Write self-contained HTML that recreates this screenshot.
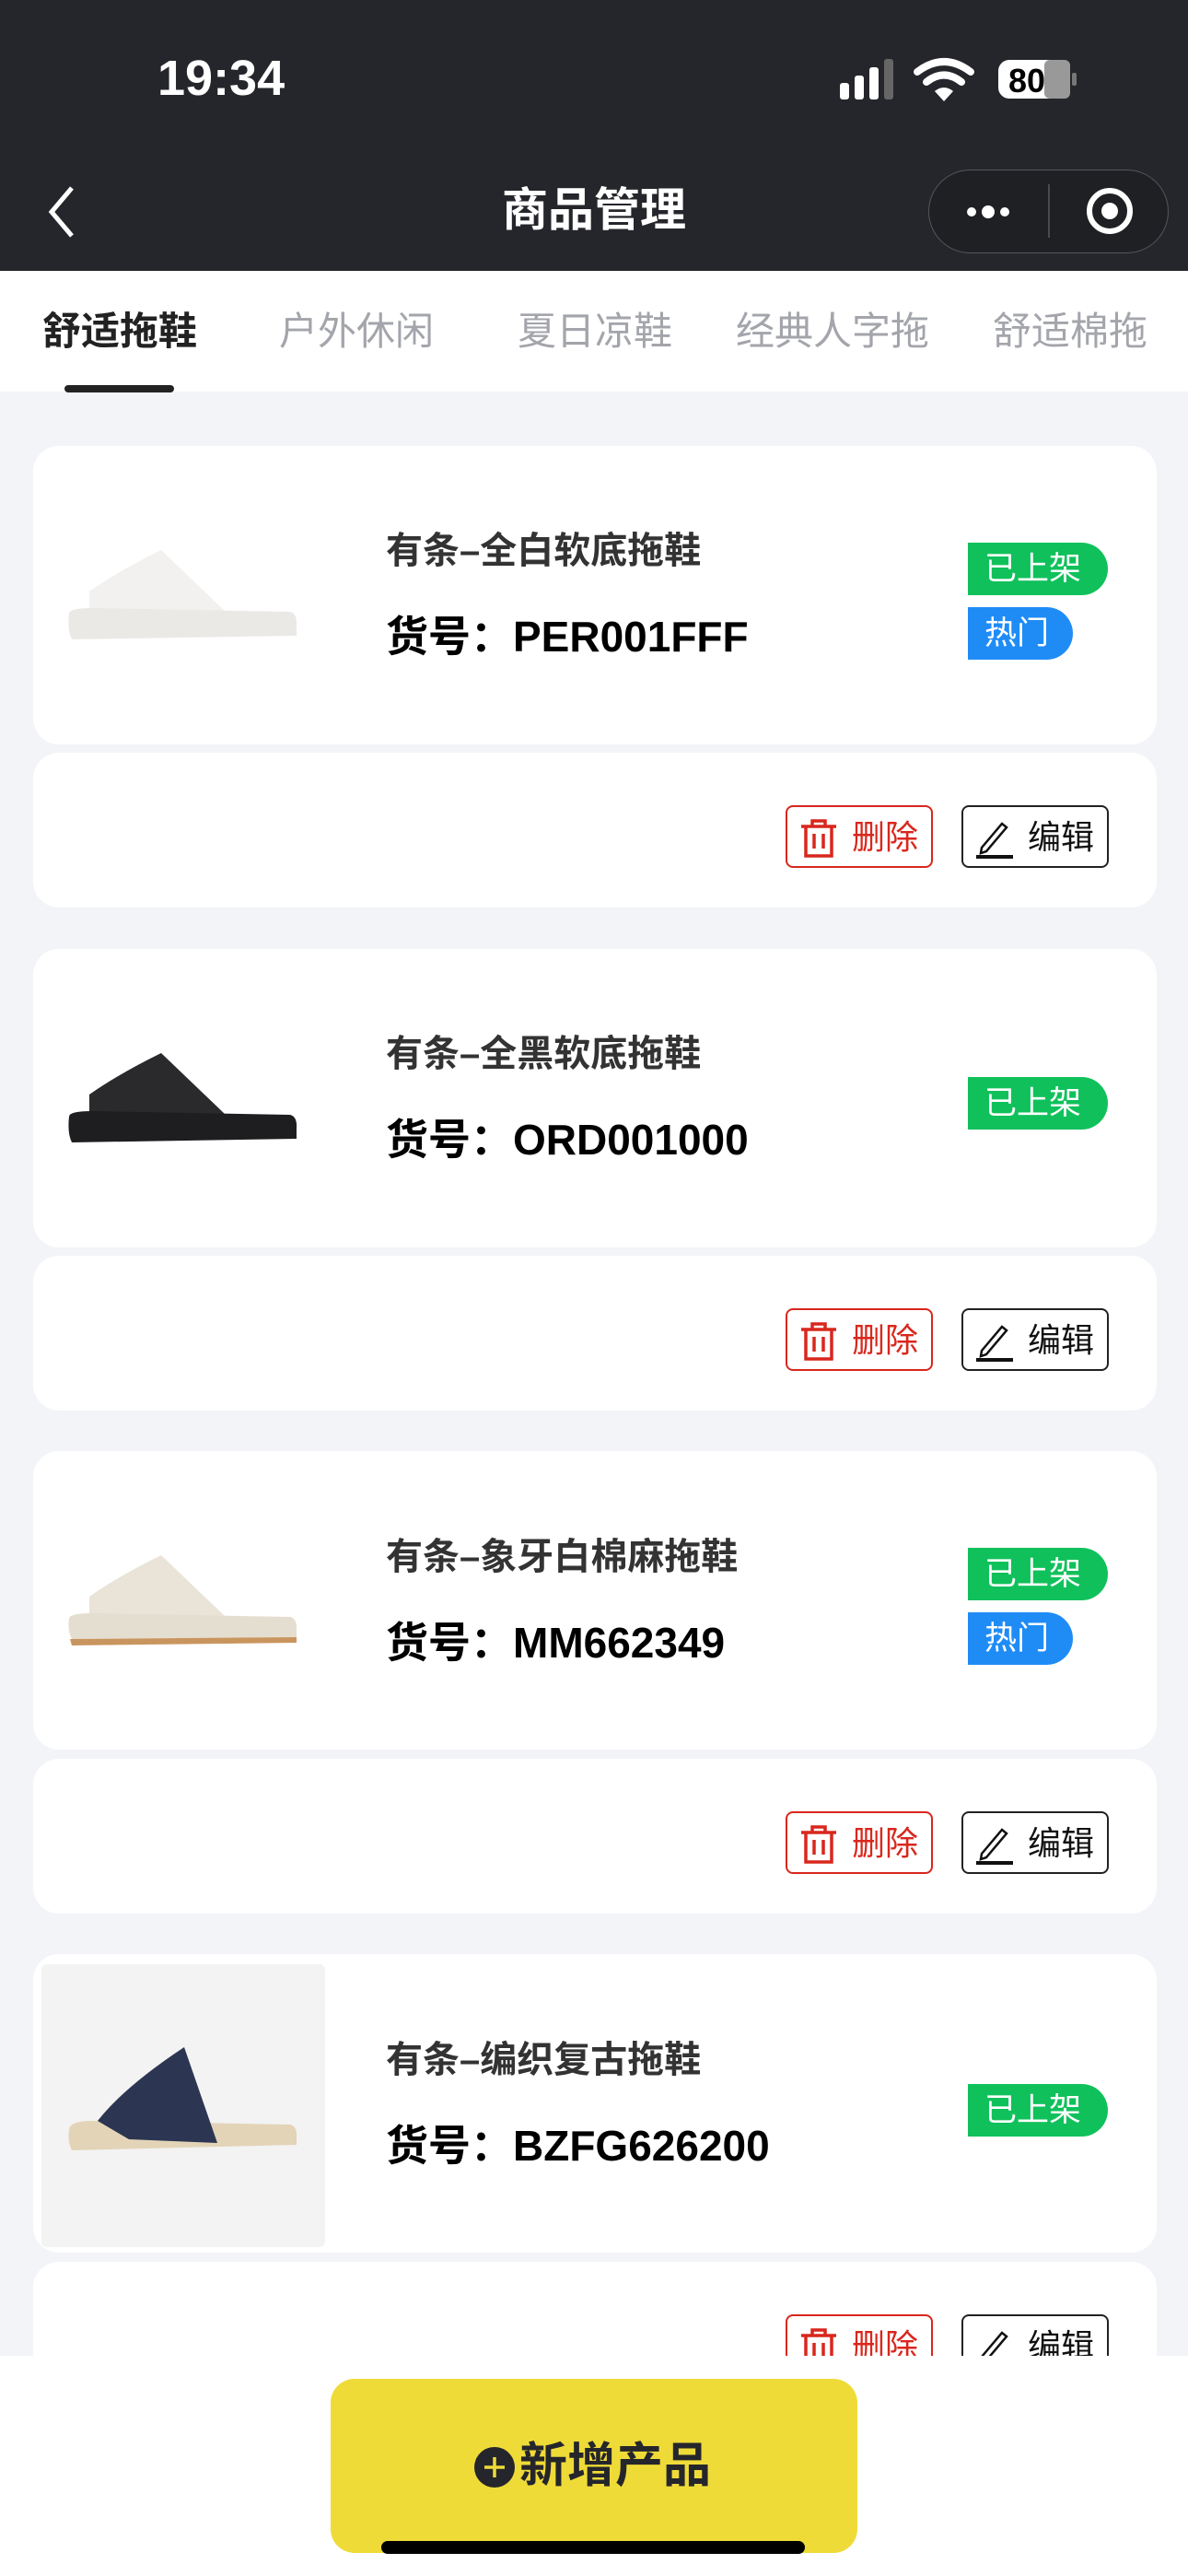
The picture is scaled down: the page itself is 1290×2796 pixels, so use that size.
<!DOCTYPE html>
<html><head><meta charset="utf-8"><style>
*{margin:0;padding:0;box-sizing:border-box}
body{width:1290px;height:2796px;background:#f3f4f8;position:relative;overflow:hidden;font-family:"Liberation Sans","Noto Sans CJK SC",sans-serif}
.abs{position:absolute}
.top{left:0;top:0;width:1290px;height:294px;background:#25262b}
.tabs{left:0;top:294px;width:1290px;height:131px;background:#fff}
.tab{position:absolute;top:331px;font-size:42px;color:#a3a5ab;line-height:58px}
.card{position:absolute;left:36px;width:1220px;background:#fff;border-radius:28px}
.title{position:absolute;left:419px;font-size:40px;color:#333;font-weight:bold;line-height:52px}
.code{position:absolute;left:419px;font-size:46px;color:#000;font-weight:bold;line-height:58px}
.badge{position:absolute;left:1051px;height:57px;border-radius:0 29px 29px 0;color:#fff;font-size:35px;line-height:57px;padding-left:18px}
.g{background:#10c15b;width:152px}
.b{background:#1f8cf6;width:114px}
.btn{position:absolute;width:160px;height:68px;border-radius:8px;font-size:36px;line-height:66px}
.del{left:853px;border:2px solid #d9271d;color:#d9271d}
.edit{left:1044px;border:2px solid #222;color:#111}
.btn svg{position:absolute;left:12px;top:12px}
.btn span{position:absolute;left:70px;top:0}
</style></head><body>
<div class="abs top"></div>
<div class="abs" style="left:171px;top:54px;font-size:54px;color:#fff;font-weight:bold">19:34</div>
<svg class="abs" style="left:912px;top:62px" width="260" height="50" viewBox="0 0 260 50">
<rect x="0" y="28" width="10" height="18" rx="3" fill="#fff"/><rect x="16" y="20" width="10" height="26" rx="3" fill="#fff"/><rect x="32" y="11" width="10" height="35" rx="3" fill="#fff"/><rect x="48" y="2" width="10" height="44" rx="3" fill="#666"/>
<path d="M84 16 Q113 -6 142 16" stroke="#fff" stroke-width="8" fill="none" stroke-linecap="round"/><path d="M94 27 Q113 12 132 27" stroke="#fff" stroke-width="8" fill="none" stroke-linecap="round"/><path d="M103 37 L113 48 L123 37 Q113 29 103 37Z" fill="#fff"/>
<rect x="172" y="3" width="78" height="42" rx="12" fill="#fff"/><rect x="222" y="3" width="28" height="42" rx="6" fill="#999"/><rect x="252" y="17" width="5" height="14" rx="2" fill="#777"/>
<text x="203" y="38" font-size="36" font-weight="bold" text-anchor="middle" fill="#000" font-family="Liberation Sans">80</text></svg>
<svg class="abs" style="left:48px;top:200px" width="40" height="60"><path d="M30 4 L8 30 L30 56" stroke="#fff" stroke-width="5" fill="none"/></svg>
<div class="abs" style="left:0;width:1290px;top:197px;text-align:center;font-size:50px;color:#fff;font-weight:bold;line-height:62px">商品管理</div>
<div class="abs" style="left:1008px;top:184px;width:261px;height:91px;border:1.5px solid #55565b;border-radius:46px;background:#1f2024"></div>
<div class="abs" style="left:1138px;top:200px;width:1.5px;height:58px;background:#4a4b50"></div>
<svg class="abs" style="left:1045px;top:212px" width="60" height="36"><circle cx="10" cy="18" r="5" fill="#fff"/><circle cx="28" cy="18" r="7" fill="#fff"/><circle cx="46" cy="18" r="5" fill="#fff"/></svg>
<svg class="abs" style="left:1176px;top:198px" width="62" height="62"><circle cx="29" cy="31" r="22" stroke="#fff" stroke-width="6" fill="none"/><circle cx="29" cy="31" r="9" fill="#fff"/></svg>
<div class="abs tabs"></div>
<div class="tab" style="left:46px;color:#222;font-weight:bold">舒适拖鞋</div>
<div class="tab" style="left:303px">户外休闲</div>
<div class="tab" style="left:562px">夏日凉鞋</div>
<div class="tab" style="left:799px">经典人字拖</div>
<div class="tab" style="left:1078px">舒适棉拖</div>
<div class="abs" style="left:70px;top:418px;width:119px;height:8px;border-radius:4px;background:#222"></div>

<!-- card 1 -->
<div class="card" style="top:484px;height:324px"></div>
<svg class="abs" style="left:40px;top:564px" width="300" height="140"><path d="M57 100 L57 78 Q90 55 135 33 L205 100Z" fill="#f2f1ef"/><path d="M35 102 Q35 96 60 96 L275 100 Q283 102 282 115 L282 126 L38 130 Q33 120 35 102Z" fill="#ebe9e6"/></svg>
<div class="title" style="top:572px">有条–全白软底拖鞋</div>
<div class="code" style="top:662px">货号：PER001FFF</div>
<div class="badge g" style="top:589px">已上架</div>
<div class="badge b" style="top:659px">热门</div>
<div class="card" style="top:817px;height:168px"></div>
<div class="btn del" style="top:874px"><svg width="44" height="44" viewBox="0 0 44 44"><path d="M3 9 H41 M15 9 V3 H29 V9 M8 9 V41 H36 V9 M17 17 V33 M27 17 V33" stroke="#d9271d" stroke-width="3.5" fill="none"/></svg><span>删除</span></div>
<div class="btn edit" style="top:874px"><svg width="44" height="44" viewBox="0 0 44 44"><path d="M8 32 L30 6 L35 10 L13 36 L7 38Z" stroke="#111" stroke-width="2.5" fill="none"/><path d="M2 42 H42" stroke="#111" stroke-width="4"/></svg><span>编辑</span></div>

<!-- card 2 -->
<div class="card" style="top:1030px;height:324px"></div>
<svg class="abs" style="left:40px;top:1110px" width="300" height="140"><path d="M57 100 L57 78 Q90 55 135 33 L205 100Z" fill="#2a2a2c"/><path d="M35 102 Q35 96 60 96 L275 100 Q283 102 282 115 L282 126 L38 130 Q33 120 35 102Z" fill="#1e1e20"/></svg>
<div class="title" style="top:1118px">有条–全黑软底拖鞋</div>
<div class="code" style="top:1208px">货号：ORD001000</div>
<div class="badge g" style="top:1169px">已上架</div>
<div class="card" style="top:1363px;height:168px"></div>
<div class="btn del" style="top:1420px"><svg width="44" height="44" viewBox="0 0 44 44"><path d="M3 9 H41 M15 9 V3 H29 V9 M8 9 V41 H36 V9 M17 17 V33 M27 17 V33" stroke="#d9271d" stroke-width="3.5" fill="none"/></svg><span>删除</span></div>
<div class="btn edit" style="top:1420px"><svg width="44" height="44" viewBox="0 0 44 44"><path d="M8 32 L30 6 L35 10 L13 36 L7 38Z" stroke="#111" stroke-width="2.5" fill="none"/><path d="M2 42 H42" stroke="#111" stroke-width="4"/></svg><span>编辑</span></div>

<!-- card 3 -->
<div class="card" style="top:1575px;height:324px"></div>
<svg class="abs" style="left:40px;top:1655px" width="300" height="140"><path d="M57 100 L57 78 Q90 55 135 33 L205 100Z" fill="#e9e4d7"/><path d="M35 102 Q35 96 60 96 L275 100 Q283 102 282 115 L282 122 L38 124 Q33 114 35 102Z" fill="#e4ded0"/><path d="M36 124 L282 122 L282 128 L38 131Z" fill="#c9955e"/></svg>
<div class="title" style="top:1664px">有条–象牙白棉麻拖鞋</div>
<div class="code" style="top:1754px">货号：MM662349</div>
<div class="badge g" style="top:1680px">已上架</div>
<div class="badge b" style="top:1750px">热门</div>
<div class="card" style="top:1909px;height:168px"></div>
<div class="btn del" style="top:1966px"><svg width="44" height="44" viewBox="0 0 44 44"><path d="M3 9 H41 M15 9 V3 H29 V9 M8 9 V41 H36 V9 M17 17 V33 M27 17 V33" stroke="#d9271d" stroke-width="3.5" fill="none"/></svg><span>删除</span></div>
<div class="btn edit" style="top:1966px"><svg width="44" height="44" viewBox="0 0 44 44"><path d="M8 32 L30 6 L35 10 L13 36 L7 38Z" stroke="#111" stroke-width="2.5" fill="none"/><path d="M2 42 H42" stroke="#111" stroke-width="4"/></svg><span>编辑</span></div>

<!-- card 4 -->
<div class="card" style="top:2121px;height:324px"></div>
<div class="abs" style="left:45px;top:2132px;width:308px;height:307px;background:#f3f3f3;border-radius:6px"></div>
<svg class="abs" style="left:40px;top:2210px" width="300" height="140"><path d="M35 102 Q35 92 60 92 L275 96 Q283 98 282 110 L282 118 L38 124 Q33 114 35 102Z" fill="#e3d4b8"/><path d="M66 92 Q95 55 160 12 L196 116 L100 112 L66 92Z" fill="#2c3552"/></svg>
<div class="title" style="top:2210px">有条–编织复古拖鞋</div>
<div class="code" style="top:2300px">货号：BZFG626200</div>
<div class="badge g" style="top:2262px">已上架</div>
<div class="card" style="top:2455px;height:168px"></div>
<div class="btn del" style="top:2512px"><svg width="44" height="44" viewBox="0 0 44 44"><path d="M3 9 H41 M15 9 V3 H29 V9 M8 9 V41 H36 V9 M17 17 V33 M27 17 V33" stroke="#d9271d" stroke-width="3.5" fill="none"/></svg><span>删除</span></div>
<div class="btn edit" style="top:2512px"><svg width="44" height="44" viewBox="0 0 44 44"><path d="M8 32 L30 6 L35 10 L13 36 L7 38Z" stroke="#111" stroke-width="2.5" fill="none"/><path d="M2 42 H42" stroke="#111" stroke-width="4"/></svg><span>编辑</span></div>

<!-- bottom -->
<div class="abs" style="left:0;top:2557px;width:1290px;height:239px;background:#fff"></div>
<div class="abs" style="left:359px;top:2582px;width:572px;height:189px;background:#efdb38;border-radius:26px"></div>
<svg class="abs" style="left:514px;top:2655px" width="46" height="46"><circle cx="23" cy="23" r="22" fill="#25262b"/><path d="M23 12 V34 M12 23 H34" stroke="#efdb38" stroke-width="3.5"/></svg>
<div class="abs" style="left:564px;top:2643px;font-size:52px;font-weight:bold;color:#25262b;line-height:68px">新增产品</div>
<div class="abs" style="left:414px;top:2758px;width:460px;height:14px;border-radius:7px;background:#000"></div>
</body></html>
